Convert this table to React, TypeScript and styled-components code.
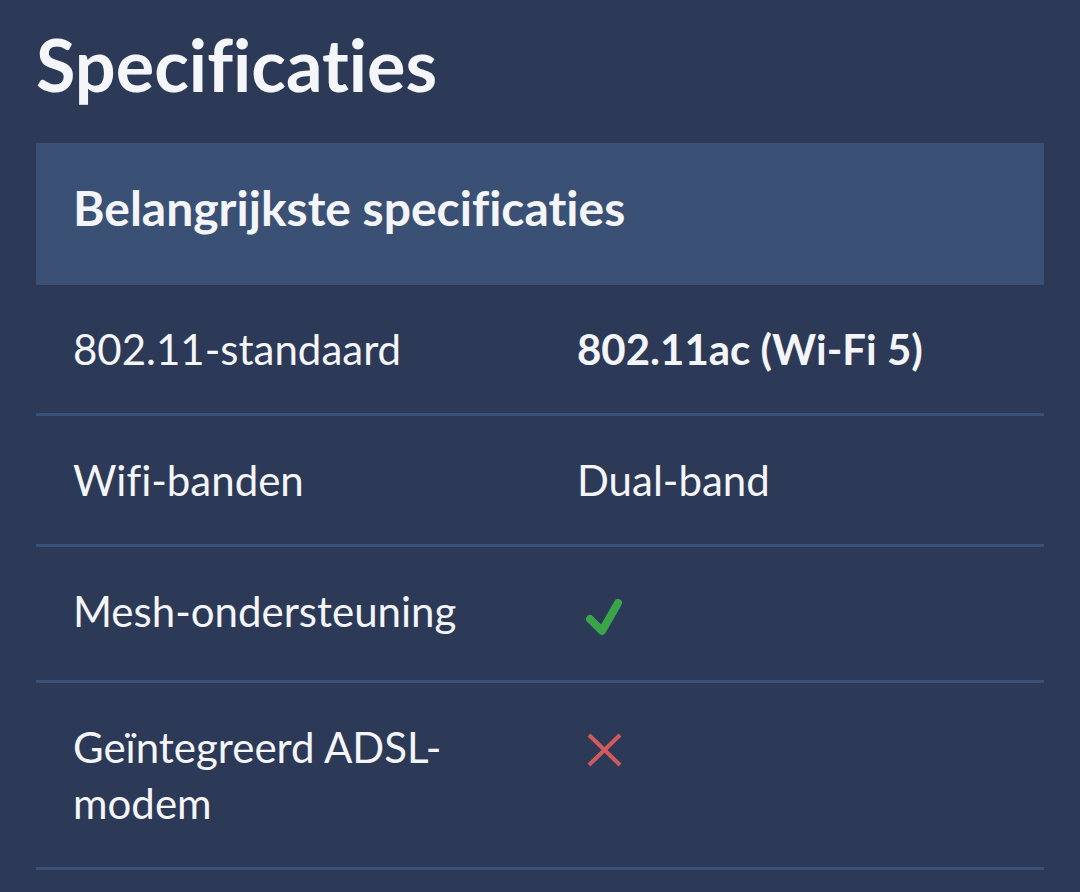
import React from 'react';
import styled, { createGlobalStyle } from 'styled-components';

const GlobalStyle = createGlobalStyle`
  html, body {
    margin: 0;
    background: #2d3a57;
  }
  body {
    font-family: Lato, 'Liberation Sans', sans-serif;
    font-variant-ligatures: none;
    color: #f3f5f8;
  }
`;

const StyledPage = styled.div`
  padding: 21px 36px 0;
`;

const StyledTitle = styled.h1`
  margin: 0 0 36px;
  font-size: 72px;
  line-height: 86px;
  font-weight: 700;
  color: #f5f6f9;
`;

const StyledTable = styled.div`
  width: 1008px;
`;

const StyledHeader = styled.div`
  height: 142px;
  box-sizing: border-box;
  padding: 37px 37px 0;
  background: #3a5074;
  font-size: 48px;
  line-height: 56px;
  font-weight: 700;
`;

const StyledRow = styled.div`
  display: grid;
  grid-template-columns: 1fr 1fr;
  border-bottom: 3px solid #3b5278;
`;

const StyledCell = styled.div<{ $bold?: boolean }>`
  padding: 36px 37px;
  font-size: 42px;
  line-height: 56px;
  font-weight: ${({ $bold }) => ($bold ? 700 : 400)};
`;

const StyledIconBox = styled.div<{ $height?: number }>`
  display: flex;
  align-items: center;
  height: ${({ $height }) => $height ?? 56}px;
  padding-top: 6px;
  box-sizing: border-box;
`;

const CheckIcon = () => (
  <svg width='48' height='48' viewBox='0 0 48 48'>
    <path
      d='M13 26 L25 38 L41 10'
      fill='none'
      stroke='#3aa449'
      strokeWidth='8'
      strokeLinecap='round'
      strokeLinejoin='round'
    />
  </svg>
);

const CrossIcon = () => (
  <svg width='48' height='48' viewBox='0 0 48 48'>
    <path
      d='M12 9 L43 39 M43 9 L12 39'
      fill='none'
      stroke='#d35a5c'
      strokeWidth='4'
    />
  </svg>
);

interface ISpecRow {
  label: string;
  value: React.ReactNode;
  bold?: boolean;
}

const rows: ISpecRow[] = [
  { label: '802.11-standaard', value: '802.11ac (Wi-Fi 5)', bold: true },
  { label: 'Wifi-banden', value: 'Dual-band' },
  {
    label: 'Mesh-ondersteuning',
    value: (
      <StyledIconBox $height={61}>
        <CheckIcon />
      </StyledIconBox>
    ),
  },
  {
    label: 'Geïntegreerd ADSL-modem',
    value: (
      <StyledIconBox>
        <CrossIcon />
      </StyledIconBox>
    ),
  },
];

const App = () => {
  return (
    <>
      <GlobalStyle />
      <StyledPage>
        <StyledTitle>Specificaties</StyledTitle>
        <StyledTable>
          <StyledHeader>Belangrijkste specificaties</StyledHeader>
          {rows.map((row) => (
            <StyledRow key={row.label}>
              <StyledCell>{row.label}</StyledCell>
              <StyledCell $bold={row.bold}>{row.value}</StyledCell>
            </StyledRow>
          ))}
        </StyledTable>
      </StyledPage>
    </>
  );
};

export default App;
